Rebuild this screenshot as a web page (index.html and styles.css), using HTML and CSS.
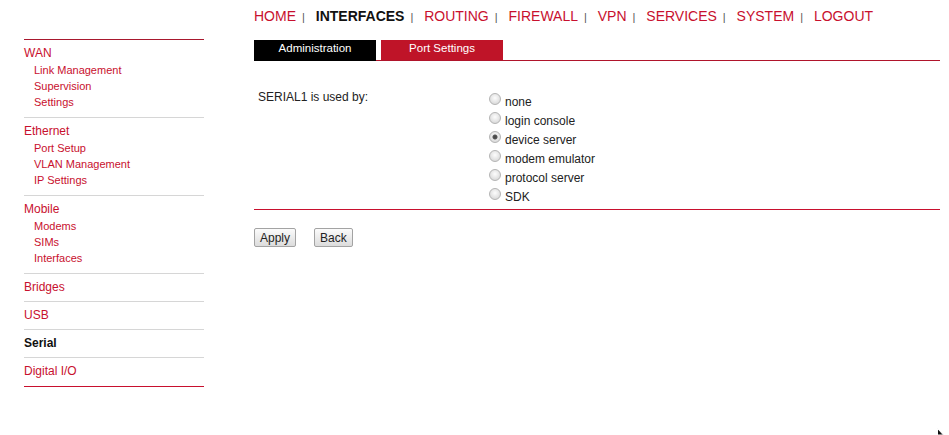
FILE: index.html
```html
<!DOCTYPE html>
<html lang="en">
<head>
  <meta charset="UTF-8">
  <meta name="viewport" content="width=device-width, initial-scale=1.0">
  <title>Interfaces - Serial</title>
  <link rel="stylesheet" href="styles.css">
</head>
<body>
  <div class="page">
    <aside class="sidebar">
      <div class="menu-group has-sub">
        <a class="menu-title" href="#">WAN</a>
        <ul class="submenu">
          <li><a href="#">Link Management</a></li>
          <li><a href="#">Supervision</a></li>
          <li><a href="#">Settings</a></li>
        </ul>
      </div>
      <div class="menu-group has-sub">
        <a class="menu-title" href="#">Ethernet</a>
        <ul class="submenu">
          <li><a href="#">Port Setup</a></li>
          <li><a href="#">VLAN Management</a></li>
          <li><a href="#">IP Settings</a></li>
        </ul>
      </div>
      <div class="menu-group has-sub">
        <a class="menu-title" href="#">Mobile</a>
        <ul class="submenu">
          <li><a href="#">Modems</a></li>
          <li><a href="#">SIMs</a></li>
          <li><a href="#">Interfaces</a></li>
        </ul>
      </div>
      <div class="menu-group">
        <a class="menu-title" href="#">Bridges</a>
      </div>
      <div class="menu-group">
        <a class="menu-title" href="#">USB</a>
      </div>
      <div class="menu-group">
        <a class="menu-title current" href="#">Serial</a>
      </div>
      <div class="menu-group">
        <a class="menu-title" href="#">Digital I/O</a>
      </div>
    </aside>

    <main class="content">
      <nav class="topnav">
        <a href="#">HOME</a><span class="sep">|</span>
        <a class="current" href="#">INTERFACES</a><span class="sep">|</span>
        <a href="#">ROUTING</a><span class="sep">|</span>
        <a href="#">FIREWALL</a><span class="sep">|</span>
        <a href="#">VPN</a><span class="sep">|</span>
        <a href="#">SERVICES</a><span class="sep">|</span>
        <a href="#">SYSTEM</a><span class="sep">|</span>
        <a href="#">LOGOUT</a>
      </nav>

      <div class="tabs">
        <a class="tab tab-dark" href="#">Administration</a>
        <a class="tab" href="#">Port Settings</a>
      </div>

      <form class="settings">
        <div class="field-row">
          <div class="field-label">SERIAL1 is used by:</div>
          <div class="field-options">
            <label class="option"><input type="radio" name="serial1" value="none">none</label>
            <label class="option"><input type="radio" name="serial1" value="login">login console</label>
            <label class="option"><input type="radio" name="serial1" value="device" checked>device server</label>
            <label class="option"><input type="radio" name="serial1" value="modem">modem emulator</label>
            <label class="option"><input type="radio" name="serial1" value="protocol">protocol server</label>
            <label class="option"><input type="radio" name="serial1" value="sdk">SDK</label>
          </div>
        </div>
        <div class="actions">
          <button type="button" class="btn">Apply</button>
          <button type="button" class="btn">Back</button>
        </div>
      </form>
    </main>
  </div>

  <div class="cursor">
    <svg width="8" height="7" viewBox="0 0 8 7"><polygon points="0.5,0.5 0.5,7 6.5,7" fill="#111" stroke="#fff" stroke-width="1"/></svg>
  </div>
</body>
</html>
```

FILE: styles.css
```css
body {
  font-family: 'Liberation Sans', Arial, sans-serif;
  margin: 0;
  padding: 0;
  background: #fff;
  color: #222;
  overflow: hidden;
}
a {
  text-decoration: none;
  color: #c8102e;
}
.page {
  display: flex;
  align-items: flex-start;
  padding-left: 24px;
}

/* left menu */
.sidebar {
  width: 180px;
  margin-top: 39px;
  border-top: 1px solid #a8182e;
}
.menu-group {
  border-bottom: 1px solid #d6d6d6;
}
.menu-group:last-child {
  border-bottom-color: #c8102e;
}
.menu-title {
  display: block;
  font-size: 12px;
  line-height: 16px;
  padding: 5px 0 6px;
}
.menu-group:last-child .menu-title {
  padding-bottom: 7px;
}
.has-sub .menu-title {
  padding-bottom: 1px;
}
.menu-title.current {
  color: #111;
  font-weight: bold;
}
.submenu {
  list-style: none;
  margin: 0;
  padding: 0 0 7px 10px;
}
.submenu a {
  display: block;
  font-size: 11px;
  line-height: 16px;
}

/* main area */
.content {
  width: 686px;
  margin-left: 50px;
}
.topnav {
  padding-top: 8px;
  font-size: 14px;
  line-height: 17px;
  white-space: nowrap;
}
.topnav a.current {
  color: #111;
  font-weight: bold;
}
.topnav .sep {
  font-size: 11px;
  color: #555;
  margin: 0 7px 0 6px;
}
.tabs {
  display: flex;
  align-items: flex-start;
  gap: 5px;
  margin-top: 14px;
  border-bottom: 1px solid #b0142b;
}
.tab {
  display: block;
  box-sizing: border-box;
  width: 122px;
  height: 20px;
  font-size: 11.5px;
  line-height: 16px;
  text-align: center;
  color: #fff;
  background: #bf1428;
}
.tab-dark {
  background: #000;
  height: 21px;
  margin-bottom: -1px;
}

.settings {
  margin: 0;
}
.field-row {
  display: grid;
  grid-template-columns: 235px 1fr;
  padding: 27px 0 2px;
  border-bottom: 1px solid #c8102e;
}
.field-label {
  padding-left: 4px;
  font-size: 12px;
  line-height: 19px;
}
.field-options {
  margin-top: 5px;
}
.option {
  display: block;
  font-size: 12px;
  line-height: 19px;
  color: #222;
}
.option input {
  appearance: none;
  -webkit-appearance: none;
  box-sizing: border-box;
  width: 12px;
  height: 12px;
  margin: 0 4px 1px 0;
  border: 1px solid #b4b4b4;
  border-radius: 50%;
  background: radial-gradient(circle at 50% 40%, #fdfdfd 0, #e9e9e9 45%, #cfcfcf 100%);
  vertical-align: baseline;
}
.option input:checked {
  background: radial-gradient(circle at 50% 50%, #444 0, #555 2px, rgba(85,85,85,0) 3px),
              radial-gradient(circle at 50% 40%, #fdfdfd 0, #e9e9e9 45%, #cfcfcf 100%);
}
.actions {
  display: flex;
  gap: 18px;
  margin-top: 18px;
}
.btn {
  font-family: 'Liberation Sans', Arial, sans-serif;
  font-size: 12px;
  height: 19px;
  padding: 0 5px;
  color: #222;
  border: 1px solid #a3a3a3;
  border-radius: 2px;
  background: linear-gradient(#fbfbfb, #dcdcdc);
}

.cursor {
  position: absolute;
  left: 937px;
  top: 428px;
  line-height: 0;
}
```
